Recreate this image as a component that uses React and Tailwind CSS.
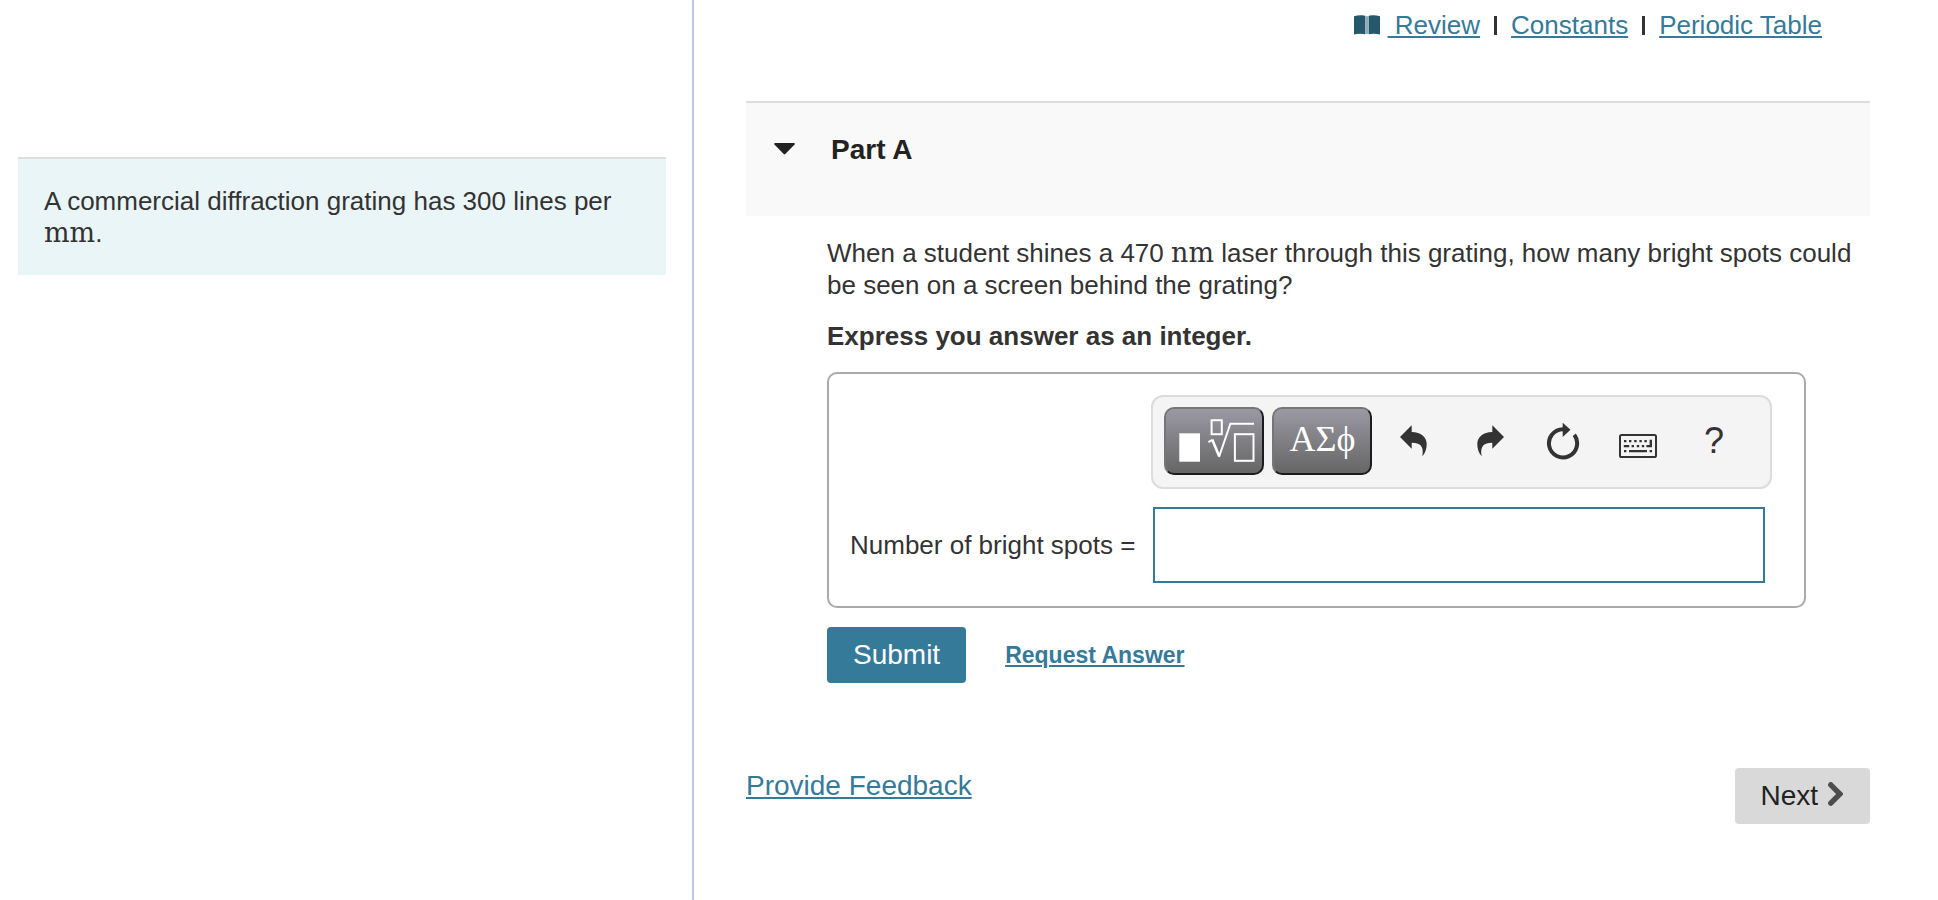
import React, { useState } from 'react';

const BookIcon = () => (
  <svg className="w-[26px] h-5" viewBox="0 0 26 20" aria-hidden="true">
    <path d="M0 1.2C4 .1 9 .1 11.4 1V19.2c-3-.7-8-.7-11.4.2z" fill="#26586d" />
    <path d="M26 1.2C22 .1 17 .1 14.6 1V19.2c3-.7 8-.7 11.4.2z" fill="#26586d" />
    <path d="M11.4 1.2h3.2V19h-3.2z" fill="#8fabb7" />
  </svg>
);

const TemplatesIcon = () => (
  <svg className="w-24 h-16" viewBox="2 2 96 64" fill="none" stroke="#fff" strokeWidth="2" aria-hidden="true">
    <rect x="15.3" y="26.3" width="20.7" height="28.4" fill="#fff" stroke="none" />
    <rect x="47.6" y="13.2" width="10.2" height="14" />
    <path d="M44.4 35.2l4-2.4" />
    <path d="M48.2 32.4l6.9 16.6" strokeWidth="2.6" />
    <path d="M55 50L66.4 16.7H90" />
    <rect x="70.9" y="27.2" width="18.6" height="26.6" />
  </svg>
);

const undoPath =
  'M6 16L17.7 4.3V11C27 11 32.7 16 32.7 23C32.7 28 31.3 32 28.3 35.3C29.8 27 28 21.7 17.7 21.7V27.7Z';

const UndoIcon = () => (
  <svg className="w-[39px] h-10" viewBox="0 0 39 40" fill="#333" aria-hidden="true">
    <path d={undoPath} />
  </svg>
);

const RedoIcon = () => (
  <svg className="w-[39px] h-10" viewBox="0 0 39 40" fill="#333" aria-hidden="true">
    <path d={undoPath} transform="translate(41) scale(-1 1)" />
  </svg>
);

const ResetIcon = () => (
  <svg className="w-[39px] h-10" viewBox="0 0 39 40" aria-hidden="true">
    <path d="M30.3 13.8A14.1 14.1 0 1 1 19 8.2" fill="none" stroke="#333" strokeWidth="4" />
    <path d="M18.7 1.7L26.5 8.7L18.7 16Z" fill="#333" />
  </svg>
);

const KeyboardIcon = () => (
  <svg className="w-[39px] h-10" viewBox="0 0 39 40" fill="#333" aria-hidden="true">
    <rect x="1" y="14" width="36" height="22" rx="1.6" fill="none" stroke="#333" strokeWidth="2" />
    <path d="M5 19h2.4v2.2H5zM10 19h2.4v2.2H10zM15.2 19h2.4v2.2h-2.4zM20.4 19h2.4v2.2h-2.4zM25.4 19h2.4v2.2h-2.4z" />
    <path d="M4.8 24h5.4v2.2H4.8zM12.6 24H15v2.2h-2.4zM17.8 24h2.4v2.2h-2.4zM22.8 24h2.4v2.2h-2.4z" />
    <path d="M30.6 18.8H33v7.4h-5.6V24h3.2z" />
    <path d="M5 29h2.4v2.2H5zM10 29h18v2.2H10zM30.6 29H33v2.2h-2.4z" />
  </svg>
);

const Divider = () => <span className="w-[3px] h-[19px] bg-[#333]" />;

const iconButton = 'w-[75px] h-[68px] flex items-center justify-center text-[#333]';
const darkButton =
  'w-[100px] h-[68px] flex items-center justify-center rounded-[10px] border-2 border-t-[#767676] border-l-[#767676] border-r-[#1c1c1c] border-b-[#1c1c1c] bg-linear-to-b from-[#9b99a3] to-[#666] text-white';

const Toolbar = () => (
  <div className="col-start-2 flex items-center rounded-xl border-2 border-[#dcdcdc] bg-[#f4f4f4] pl-[11px] pt-2.5 pb-3">
    <button type="button" aria-label="Templates" className={darkButton}>
      <TemplatesIcon />
    </button>
    <button
      type="button"
      aria-label="Symbols"
      className={`${darkButton} ml-2 pb-1 font-['Liberation_Serif',serif] text-[36px] leading-9`}
    >
      ΑΣϕ
    </button>
    <div className="flex ml-1">
      <button type="button" aria-label="Undo" className={iconButton}><UndoIcon /></button>
      <button type="button" aria-label="Redo" className={iconButton}><RedoIcon /></button>
      <button type="button" aria-label="Reset" className={iconButton}><ResetIcon /></button>
      <button type="button" aria-label="Keyboard shortcuts" className={iconButton}><KeyboardIcon /></button>
      <button type="button" aria-label="Help" className={`${iconButton} text-[36px] leading-9`}>?</button>
    </div>
  </div>
);

const Unit = ({ children }) => (
  <span className="font-['DejaVu_Serif',serif] text-[27px] leading-none">{children}</span>
);

const App = () => {
  const [open, setOpen] = useState(true);
  const [answer, setAnswer] = useState('');

  return (
    <div className="grid grid-cols-[694fr_1244fr] min-h-screen bg-white font-['Liberation_Sans',Arial,sans-serif] text-[26px] leading-8 text-[#333]">
      {/* Problem statement */}
      <aside className="border-r-2 border-[#bcc8df] pt-[157px] pl-[18px] pr-[26px]">
        <div className="border-t-2 border-[#dedede] bg-[#eaf5f7] p-[26px]">
          <p>
            A commercial diffraction grating has 300 lines per <Unit>mm</Unit>.
          </p>
        </div>
      </aside>

      <main className="pl-[52px] pr-[68px]">
        {/* Resource links */}
        <nav className="flex items-center justify-end pt-[9px] pr-12 gap-[14px] text-[#357a99]">
          <div className="flex items-center gap-2">
            <BookIcon />
            <a href="#review" className="underline decoration-2 underline-offset-2 whitespace-pre"> Review</a>
          </div>
          <Divider />
          <a href="#constants" className="underline decoration-2 underline-offset-2">Constants</a>
          <Divider />
          <a href="#periodic-table" className="underline decoration-2 underline-offset-2">Periodic Table</a>
        </nav>

        {/* Part header */}
        <header className="mt-[60px] h-[115px] border-t-2 border-[#dedede] bg-[#f9f9f9] pt-[31px] pl-7">
          <button
            type="button"
            aria-expanded={open}
            onClick={() => setOpen(!open)}
            className="flex items-center text-[28px] font-bold text-[#222]"
          >
            <svg className="w-[21px] h-3 mr-9 mb-0.5" viewBox="0 0 21 12" fill="#222" aria-hidden="true">
              <path d="M.8 0h19.4q1 .6.4 1.4L11.3 11q-.8.8-1.6 0L.4 1.4Q-.2.6.8 0z" />
            </svg>
            Part A
          </button>
        </header>

        {open && (
          <section className="pt-[21px] pl-[81px]">
            <p>
              When a student shines a 470 <Unit>nm</Unit> laser through this grating, how many bright
              spots could be seen on a screen behind the grating?
            </p>
            <p className="mt-[19px] font-bold">Express you answer as an integer.</p>

            <div className="mt-5 mr-16 grid grid-cols-[auto_1fr] items-center gap-y-[18px] rounded-[10px] border-2 border-[#aaa] pt-[21px] pb-[23px] pl-[21px] pr-8">
              <Toolbar />
              <label htmlFor="answer" className="pr-4">Number of bright spots =</label>
              <input
                id="answer"
                type="text"
                value={answer}
                onChange={(e) => setAnswer(e.target.value)}
                className="h-[76px] ml-0.5 mr-[7px] border-2 border-[#357a99] px-3 outline-none"
              />
            </div>

            <div className="mt-[19px] flex items-center gap-[39px]">
              <button type="button" className="h-14 rounded bg-[#357a99] px-[26px] text-[28px] text-white">
                Submit
              </button>
              <a href="#request" className="text-[23px] font-bold text-[#357a99] underline decoration-2 underline-offset-2">
                Request Answer
              </a>
            </div>
          </section>
        )}

        {/* Footer */}
        <footer className="mt-[85px] flex items-start justify-between text-[28px]">
          <a href="#feedback" className="pt-0.5 text-[#357a99] underline decoration-2 underline-offset-2">Provide Feedback</a>
          <button type="button" className="h-14 flex items-center gap-2.5 rounded bg-[#d9d9d9] pl-[25px] pr-[27px] text-[#222]">
            Next
            <svg className="w-[15px] h-6 mb-1" viewBox="0 0 15 24" fill="none" stroke="#4d4d4d" strokeWidth="5.4" strokeLinecap="round" aria-hidden="true">
              <path d="M2.8 2.8L12 12L2.8 21.2" />
            </svg>
          </button>
        </footer>
      </main>
    </div>
  );
};

export default App;
